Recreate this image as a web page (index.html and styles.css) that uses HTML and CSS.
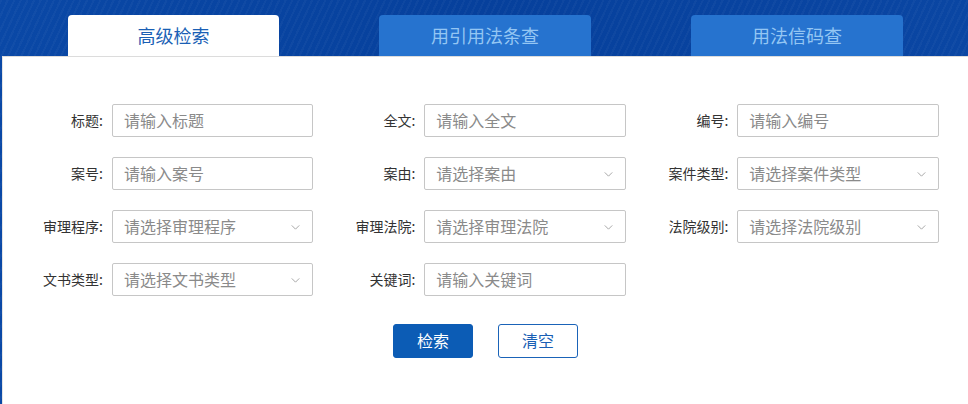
FILE: index.html
```html
<!DOCTYPE html>
<html lang="zh-CN">
<head>
<meta charset="utf-8">
<title>高级检索</title>
<link rel="stylesheet" href="styles.css">
</head>
<body>
<div class="page">
  <div class="tabs">
    <div class="tab active">高级检索</div>
    <div class="tab">用引用法条查</div>
    <div class="tab">用法信码查</div>
  </div>
  <div class="panel">
    <div class="form">
      <div class="field"><label class="lbl">标题:</label><div class="ctrl">请输入标题</div></div>
      <div class="field"><label class="lbl">全文:</label><div class="ctrl">请输入全文</div></div>
      <div class="field"><label class="lbl">编号:</label><div class="ctrl">请输入编号</div></div>

      <div class="field"><label class="lbl">案号:</label><div class="ctrl">请输入案号</div></div>
      <div class="field"><label class="lbl">案由:</label><div class="ctrl select">请选择案由<svg class="arrow" viewBox="0 0 10 6"><path d="M0.5 0.5 L5 5 L9.5 0.5" /></svg></div></div>
      <div class="field"><label class="lbl">案件类型:</label><div class="ctrl select">请选择案件类型<svg class="arrow" viewBox="0 0 10 6"><path d="M0.5 0.5 L5 5 L9.5 0.5" /></svg></div></div>

      <div class="field"><label class="lbl">审理程序:</label><div class="ctrl select">请选择审理程序<svg class="arrow" viewBox="0 0 10 6"><path d="M0.5 0.5 L5 5 L9.5 0.5" /></svg></div></div>
      <div class="field"><label class="lbl">审理法院:</label><div class="ctrl select">请选择审理法院<svg class="arrow" viewBox="0 0 10 6"><path d="M0.5 0.5 L5 5 L9.5 0.5" /></svg></div></div>
      <div class="field"><label class="lbl">法院级别:</label><div class="ctrl select">请选择法院级别<svg class="arrow" viewBox="0 0 10 6"><path d="M0.5 0.5 L5 5 L9.5 0.5" /></svg></div></div>

      <div class="field"><label class="lbl">文书类型:</label><div class="ctrl select">请选择文书类型<svg class="arrow" viewBox="0 0 10 6"><path d="M0.5 0.5 L5 5 L9.5 0.5" /></svg></div></div>
      <div class="field"><label class="lbl">关键词:</label><div class="ctrl">请输入关键词</div></div>
    </div>
    <div class="actions">
      <button class="btn primary">检索</button>
      <button class="btn ghost">清空</button>
    </div>
  </div>
</div>
</body>
</html>
```
FILE: styles.css
```css
* { box-sizing: border-box; }
html, body { margin: 0; padding: 0; }
body {
  width: 968px;
  height: 404px;
  overflow: hidden;
  font-family: "Noto Sans CJK SC", "Liberation Sans", sans-serif;
  background: #0a44a0;
}
.page {
  height: 404px;
  display: flex;
  flex-direction: column;
  background:
    repeating-linear-gradient(115deg, rgba(255,255,255,0.03) 0 2px, rgba(255,255,255,0) 2px 6px),
    linear-gradient(90deg, #0a48a6 0%, #06409c 50%, #0a46a3 100%);
}
.tabs {
  display: flex;
  gap: 100px;
  padding: 15px 0 0 68px;
  height: 56px;
}
.tab {
  width: 212px;
  height: 41px;
  border-radius: 4px 4px 0 0;
  background: #2673cf;
  color: #94c6f3;
  font-size: 18px;
  display: flex;
  align-items: center;
  justify-content: center;
  padding-bottom: 1px;
}
.tab.active {
  width: 211px;
  background: #ffffff;
  color: #1a5fb5;
}
.panel {
  flex: 1;
  margin-left: 2px;
  background: #ffffff;
  border-top: 1px solid #dcdcdc;
  border-left: 1px solid #e4e4e4;
  padding-top: 47px;
}
.form {
  display: grid;
  grid-template-columns: 312px 313px 313px;
  row-gap: 20px;
  margin-left: -2px;
}
.field {
  display: flex;
  align-items: center;
  gap: 8px;
}
.lbl {
  width: 104px;
  text-align: right;
  font-size: 14px;
  color: #333333;
  white-space: nowrap;
  padding-right: 1px;
  padding-bottom: 2px;
}
.ctrl {
  position: relative;
  width: 203px;
  height: 33px;
  border: 1px solid #c6c6c6;
  border-radius: 2px;
  padding-left: 11px;
  padding-bottom: 2px;
  font-size: 16px;
  color: #8a8a8a;
  display: flex;
  align-items: center;
}
.arrow {
  position: absolute;
  right: 12px;
  top: 14px;
  width: 9px;
  height: 5px;
  fill: none;
  stroke: #a0a0a0;
  stroke-width: 1.1;
}
.actions {
  display: flex;
  justify-content: center;
  gap: 25px;
  margin-top: 28px;
}
.btn {
  width: 80px;
  height: 34px;
  font-family: "Noto Sans CJK SC", "Liberation Sans", sans-serif;
  font-size: 16px;
  border-radius: 3px;
  padding: 0 0 2px 0;
}
.btn.primary {
  background: #0c5cb5;
  border: 1px solid #0c5cb5;
  color: #ffffff;
}
.btn.ghost {
  background: #ffffff;
  border: 1px solid #1a63b8;
  color: #1a5fb5;
}
```
